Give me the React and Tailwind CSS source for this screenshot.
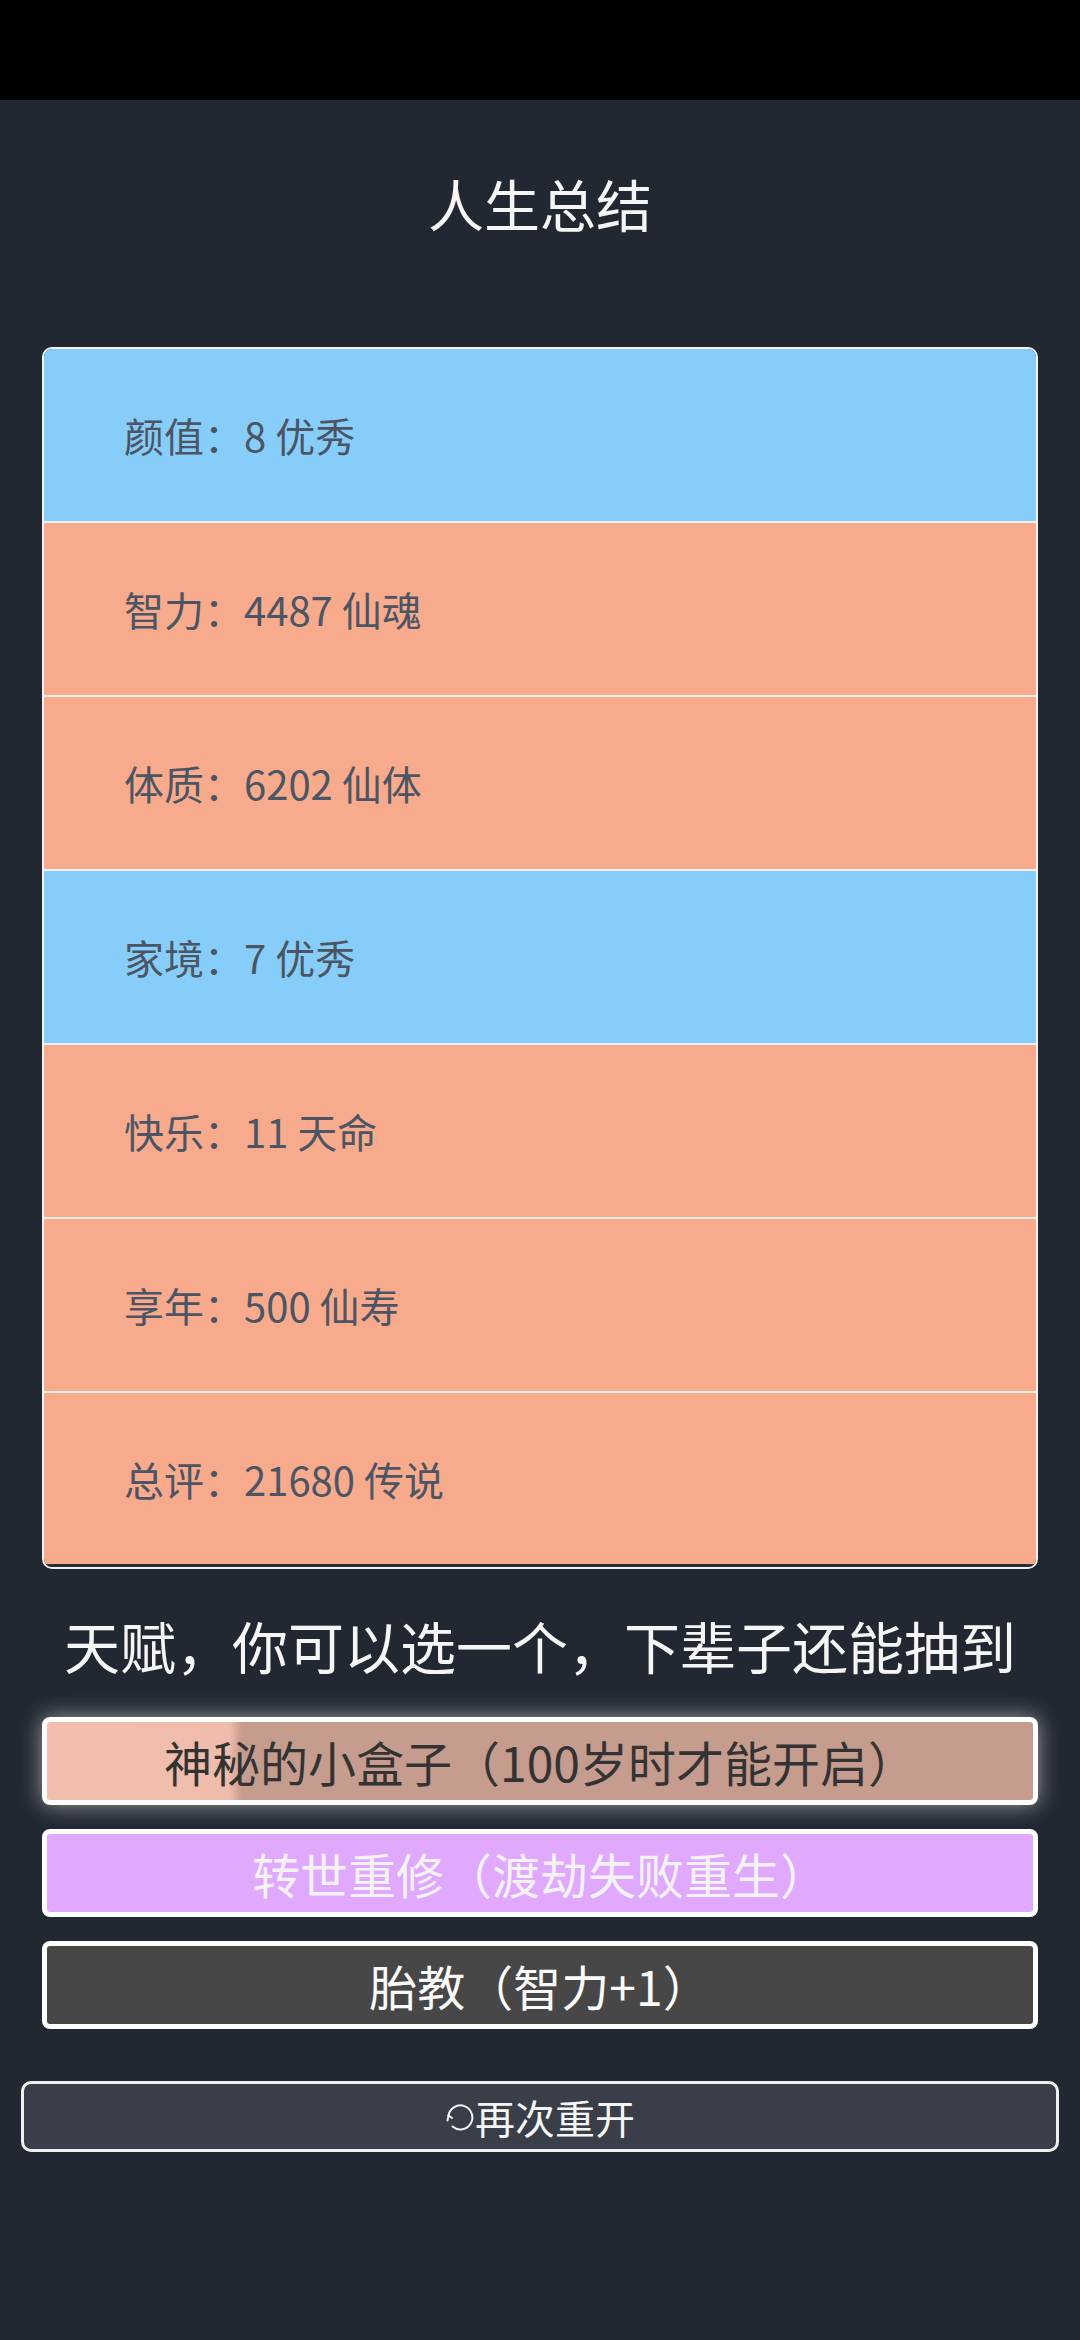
import React from 'react';

const stats = [
  { label: '颜值', value: '8 优秀', tone: 'blue' },
  { label: '智力', value: '4487 仙魂', tone: 'orange' },
  { label: '体质', value: '6202 仙体', tone: 'orange' },
  { label: '家境', value: '7 优秀', tone: 'blue' },
  { label: '快乐', value: '11 天命', tone: 'orange' },
  { label: '享年', value: '500 仙寿', tone: 'orange' },
  { label: '总评', value: '21680 传说', tone: 'orange' },
];

const RestartIcon = () => (
  <svg width="30" height="30" viewBox="0 0 30 30" fill="none" stroke="#f2f2f2" strokeWidth="2" strokeLinecap="round">
    <path d="M3.5 13.5 A12 12 0 1 1 7.5 24.5" />
    <path d="M3.5 13.5 L2.5 18.5" />
    <path d="M3.5 13.5 L7 16" />
  </svg>
);

const App = () => {
  return (
    <div
      className="min-h-[2340px] bg-[#222831] flex flex-col"
      style={{ fontFamily: '"Noto Sans CJK SC", "Noto Sans", sans-serif' }}
    >
      <div className="h-[100px] bg-black" />

      <div className="h-[206px] flex items-center justify-center">
        <h1 className="text-[56px] leading-none text-[#f5f5f5]">人生总结</h1>
      </div>

      <ul className="mx-[42px] mt-[41px] border-2 border-[#f2f2f2] rounded-[10px] overflow-hidden">
        {stats.map((s, i) => (
          <li
            key={s.label}
            className={`h-[174px] flex items-center pl-[80px] text-[40px] text-[#4b5563] ${
              s.tone === 'blue' ? 'bg-[#87cdf9]' : 'bg-[#f8aa8c]'
            } ${i === stats.length - 1 ? 'border-b-[3px] border-[#2a2d33]' : 'border-b-2 border-[#eeeeee]'}`}
          >
            {s.label}：{s.value}
          </li>
        ))}
      </ul>

      <div className="mt-[26px] h-[100px] flex items-center justify-center">
        <h2 className="text-[56px] leading-none text-[#f5f5f5]">天赋，你可以选一个，下辈子还能抽到</h2>
      </div>

      <div className="mx-[42px] mt-[22px] flex flex-col gap-[24px]">
        <button className="h-[88px] border-[5px] border-white rounded-[8px] text-[48px] text-[#333333] shadow-[0_0_22px_rgba(255,255,255,0.55)] bg-[linear-gradient(90deg,#f2bead_0,#f0bcab_182px,#c59c8e_195px)] flex items-center justify-center">
          神秘的小盒子（100岁时才能开启）
        </button>
        <button className="h-[88px] border-[5px] border-white rounded-[8px] text-[48px] text-[#f3f3f3] bg-[#e1a9fd] flex items-center justify-center">
          转世重修（渡劫失败重生）
        </button>
        <button className="h-[88px] border-[5px] border-white rounded-[8px] text-[48px] text-[#fafafa] bg-[#474747] flex items-center justify-center">
          胎教（智力+1）
        </button>
      </div>

      <button className="mx-[21px] mt-[52px] h-[71px] border-[3px] border-[#f0f0f0] rounded-[10px] bg-[#393e48] text-[40px] text-[#f5f5f5] flex items-center justify-center">
        <RestartIcon />
        <span>再次重开</span>
      </button>
    </div>
  );
};

export default App;
